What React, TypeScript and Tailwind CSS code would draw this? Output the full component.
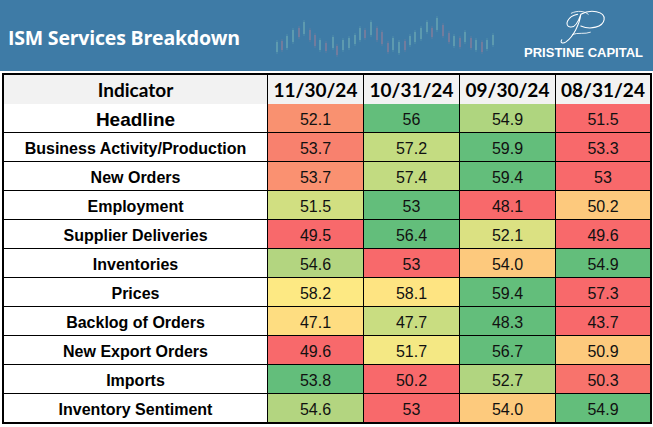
import React from 'react';

type Row = { label: string; big?: boolean; cells: [string, string][] };

// value + background colour for each cell (excel colour scale)
const rows: Row[] = [
  { label: 'Headline', big: true, cells: [['52.1', '#f99170'], ['56', '#63be7b'], ['54.9', '#afd57f'], ['51.5', '#f8696b']] },
  { label: 'Business Activity/Production', cells: [['53.7', '#f8816e'], ['57.2', '#c4dc81'], ['59.9', '#63be7b'], ['53.3', '#f8696b']] },
  { label: 'New Orders', cells: [['53.7', '#fa9171'], ['57.4', '#c2db81'], ['59.4', '#63be7b'], ['53', '#f8696b']] },
  { label: 'Employment', cells: [['51.5', '#d1df81'], ['53', '#63be7b'], ['48.1', '#f8696b'], ['50.2', '#fdc97d']] },
  { label: 'Supplier Deliveries', cells: [['49.5', '#f8696b'], ['56.4', '#63be7b'], ['52.1', '#dbe182'], ['49.6', '#f8696b']] },
  { label: 'Inventories', cells: [['54.6', '#b3d580'], ['53', '#f8696b'], ['54.0', '#fdc97d'], ['54.9', '#63be7b']] },
  { label: 'Prices', cells: [['58.2', '#fde983'], ['58.1', '#fee482'], ['59.4', '#63be7b'], ['57.3', '#f8696b']] },
  { label: 'Backlog of Orders', cells: [['47.1', '#fedd81'], ['47.7', '#c9dd81'], ['48.3', '#63be7b'], ['43.7', '#f8696b']] },
  { label: 'New Export Orders', cells: [['49.6', '#f8696b'], ['51.7', '#f4e884'], ['56.7', '#63be7b'], ['50.9', '#fdca7d']] },
  { label: 'Imports', cells: [['53.8', '#63be7b'], ['50.2', '#f8696b'], ['52.7', '#b1d580'], ['50.3', '#f8736c']] },
  { label: 'Inventory Sentiment', cells: [['54.6', '#b3d580'], ['53', '#f8696b'], ['54.0', '#fdca7d'], ['54.9', '#63be7b']] },
];

const dates = ['11/30/24', '10/31/24', '09/30/24', '08/31/24'];

// candles: [x, top, bottom, up?]
const candles: [number, number, number, boolean][] = [
  [277, 42, 52, true], [282, 41, 50, false], [287, 36, 48, true], [293, 30, 42, true], [299, 28, 37, false],
  [304, 22, 34, true], [310, 30, 40, false], [315, 35, 46, false], [320, 40, 50, true], [326, 43, 51, false],
  [333, 37, 48, true], [337, 46, 55, false], [343, 40, 50, true], [349, 38, 48, true], [355, 35, 44, true],
  [360, 28, 40, true], [365, 30, 38, false], [371, 22, 35, true], [377, 28, 40, false], [382, 32, 44, false],
  [388, 43, 52, false], [393, 38, 50, true], [399, 42, 53, true], [405, 41, 50, false], [410, 36, 45, true],
  [415, 32, 42, true], [421, 28, 39, true], [427, 22, 32, true], [432, 28, 37, false], [437, 18, 30, true],
  [443, 25, 36, false], [449, 33, 42, false], [454, 36, 46, true], [460, 38, 47, false], [465, 32, 42, true],
  [471, 38, 48, false], [476, 40, 50, true], [482, 42, 52, false], [487, 40, 49, true], [493, 35, 45, true],
];

function Candles() {
  return (
    <svg width="653" height="71" className="absolute left-0 top-0" viewBox="0 0 653 71">
      {candles.map(([x, t, b, up], i) => (
        <g key={i} opacity={0.4}>
          <line x1={x} x2={x} y1={t - 2} y2={b + 2} stroke={up ? '#8cc9bd' : '#c07f92'} strokeWidth="0.6" />
          <rect x={x - 1} y={t} width="2" height={b - t} fill={up ? '#8cc9bd' : '#c07f92'} />
        </g>
      ))}
    </svg>
  );
}

function Logo() {
  return (
    <div className="flex flex-col items-center">
      <svg width="62" height="36" viewBox="0 0 56 34" fill="none" stroke="white" strokeWidth="1" strokeLinecap="round">
        {/* script P */}
        <path d="M22 5 C12 7 9 16 15 17 C20 18 23 11 25 5 C24 14 18 26 11 31 C8 33 5 32 7 29" />
        <path d="M25 5 C34 0 48 2 47 10 C46 17 34 20 25 16" />
        <path d="M16 4 C22 1 29 2 32 5" strokeWidth="0.8" />
        <path d="M17 24 C22 22 29 24 34 22" strokeWidth="0.8" />
      </svg>
      <div className="mt-[1px] text-[13px] font-bold leading-none text-white" style={{ fontFamily: '"Liberation Sans", Arial, sans-serif' }}>
        PRISTINE CAPITAL
      </div>
    </div>
  );
}

export default function App() {
  return (
    <div className="w-[653px] h-[427px] bg-white overflow-hidden">
      <div className="relative flex h-[71px] items-center justify-between bg-[#3e7ba6] pl-[8px] pr-[10px]">
        <Candles />
        <div className="relative pt-[4px] text-[19.5px] font-bold tracking-[-0.2px] text-white" style={{ fontFamily: '"Open Sans", sans-serif' }}>
          ISM Services Breakdown
        </div>
        <div className="relative -mt-[4px]">
          <Logo />
        </div>
      </div>

      <div className="ml-[2px] mt-[2px] w-[650px] border-2 border-black">
        <div
          className="grid h-[29px] grid-cols-[263px_95px_95px_95px_94px] gap-x-px border-b-2 border-black bg-black text-[19px] font-bold text-black"
          style={{ fontFamily: 'Lato, sans-serif' }}
        >
          <div className="flex items-center justify-center bg-[#f2f2f2] pt-[1px]">Indicator</div>
          {dates.map((d) => (
            <div key={d} className="flex items-center justify-center bg-[#f2f2f2] pt-[1px]">{d}</div>
          ))}
        </div>
        <div
          className="grid grid-cols-[263px_95px_95px_95px_94px] auto-rows-[28px] gap-px bg-black text-black"
          style={{ fontFamily: '"Liberation Sans", Arial, sans-serif' }}
        >
          {rows.map((r) => (
            <React.Fragment key={r.label}>
              <div className={`flex items-center justify-center bg-white font-bold ${r.big ? 'text-[19px] pt-[5px]' : 'text-[16px] pt-[3px]'}`}>
                {r.label}
              </div>
              {r.cells.map(([v, c], i) => (
                <div key={i} className="flex items-center justify-center pt-[3px] text-[16px] text-[#111]" style={{ backgroundColor: c }}>
                  {v}
                </div>
              ))}
            </React.Fragment>
          ))}
        </div>
      </div>
    </div>
  );
}
